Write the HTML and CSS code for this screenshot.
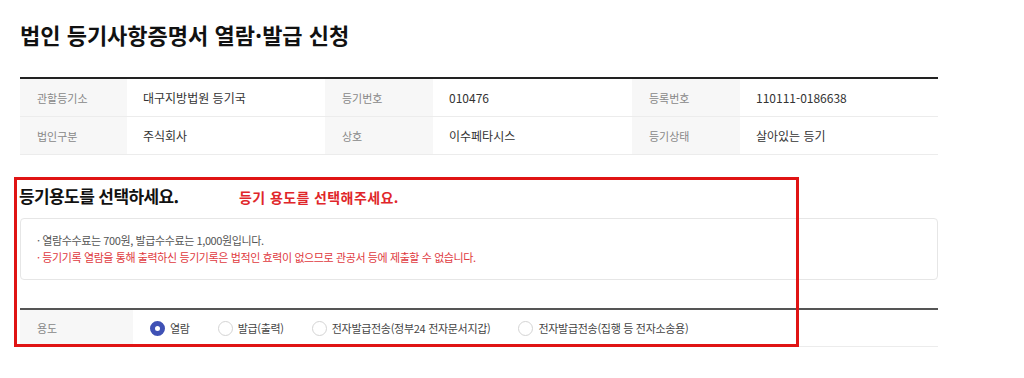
FILE: index.html
```html
<!DOCTYPE html>
<html lang="ko">
<head>
<meta charset="utf-8">
<title>법인 등기사항증명서 열람·발급 신청</title>
<link rel="stylesheet" href="styles.css">
</head>
<body>
<div class="page">
  <h1 class="title">법인 등기사항증명서 열람·발급 신청</h1>

  <div class="info-table">
    <div class="row">
      <div class="th">관할등기소</div>
      <div class="td">대구지방법원 등기국</div>
      <div class="th">등기번호</div>
      <div class="td">010476</div>
      <div class="th">등록번호</div>
      <div class="td">110111-0186638</div>
    </div>
    <div class="row">
      <div class="th">법인구분</div>
      <div class="td">주식회사</div>
      <div class="th">상호</div>
      <div class="td">이수페타시스</div>
      <div class="th">등기상태</div>
      <div class="td">살아있는 등기</div>
    </div>
  </div>

  <div class="section">
    <div class="sec-head">
      <h2 class="sec-title">등기용도를 선택하세요.</h2>
      <span class="sec-note">등기 용도를 선택해주세요.</span>
    </div>
    <div class="notice">
      <p class="line">· 열람수수료는 700원, 발급수수료는 1,000원입니다.</p>
      <p class="line red">· 등기기록 열람을 통해 출력하신 등기기록은 법적인 효력이 없으므로 관공서 등에 제출할 수 없습니다.</p>
    </div>
    <div class="use-table">
      <div class="th">용도</div>
      <div class="opts">
        <label class="opt"><span class="radio checked"></span>열람</label>
        <label class="opt"><span class="radio"></span>발급(출력)</label>
        <label class="opt"><span class="radio"></span>전자발급전송(정부24 전자문서지갑)</label>
        <label class="opt"><span class="radio"></span>전자발급전송(집행 등 전자소송용)</label>
      </div>
    </div>
    <div class="mark"></div>
  </div>
</div>
</body>
</html>
```

FILE: styles.css
```css
* { box-sizing: border-box; }
html, body { margin: 0; padding: 0; background: #fff; }
body {
  font-family: "Noto Sans CJK KR", "Noto Sans", sans-serif;
  color: #222;
}
.page {
  width: 938px;
  padding: 18px 0 0 20px;
}
.title {
  margin: 0;
  font-size: 22px;
  line-height: 32px;
  font-weight: 700;
  letter-spacing: 0;
  color: #111;
}
.info-table {
  margin-top: 27px;
  border-top: 2px solid #222;
}
.row {
  display: grid;
  grid-template-columns: 107px 198px 108px 199px 108px 198px;
  height: 38px;
  border-bottom: 1px solid #ececec;
}
.th {
  background: #f7f7f7;
  color: #888;
  font-size: 11px;
  padding-left: 17px;
  display: flex;
  align-items: center;
}
.td {
  color: #333;
  font-size: 12px;
  padding-left: 16px;
  display: flex;
  align-items: center;
}
.section {
  position: relative;
  margin-top: 28px;
}
.sec-head {
  display: flex;
  align-items: center;
  height: 24px;
}
.sec-title {
  margin: 0;
  font-size: 17px;
  font-weight: 700;
  color: #111;
  letter-spacing: -0.6px;
  width: 220px;
  margin-left: -1px;
}
.sec-note {
  font-size: 14px;
  font-weight: 700;
  color: #e0262a;
  letter-spacing: 0.4px;
  padding-top: 3px;
}
.notice {
  margin-top: 11px;
  border: 1px solid #e6e6e6;
  border-radius: 4px;
  padding: 13px 16px;
}
.line {
  margin: 0;
  font-size: 11px;
  line-height: 17px;
  color: #555;
  letter-spacing: -0.4px;
}
.line.red { color: #e0393e; }
.use-table {
  margin-top: 28px;
  border-top: 2px solid #555;
  border-bottom: 1px solid #ececec;
  height: 39px;
  display: grid;
  grid-template-columns: 113px 1fr;
}
.opts {
  display: flex;
  align-items: center;
  gap: 28px;
  padding-left: 17px;
}
.opt {
  display: flex;
  align-items: center;
  gap: 5px;
  font-size: 11px;
  color: #444;
  letter-spacing: -0.3px;
}
.radio {
  width: 15px;
  height: 15px;
  border-radius: 50%;
  border: 1px solid #d4d4d4;
  background: #fff;
}
.radio.checked {
  border: 5px solid #3f51b5;
}
.mark {
  position: absolute;
  left: -6px;
  top: -6px;
  width: 785px;
  height: 170px;
  border: 3px solid #e01414;
  pointer-events: none;
}
```
